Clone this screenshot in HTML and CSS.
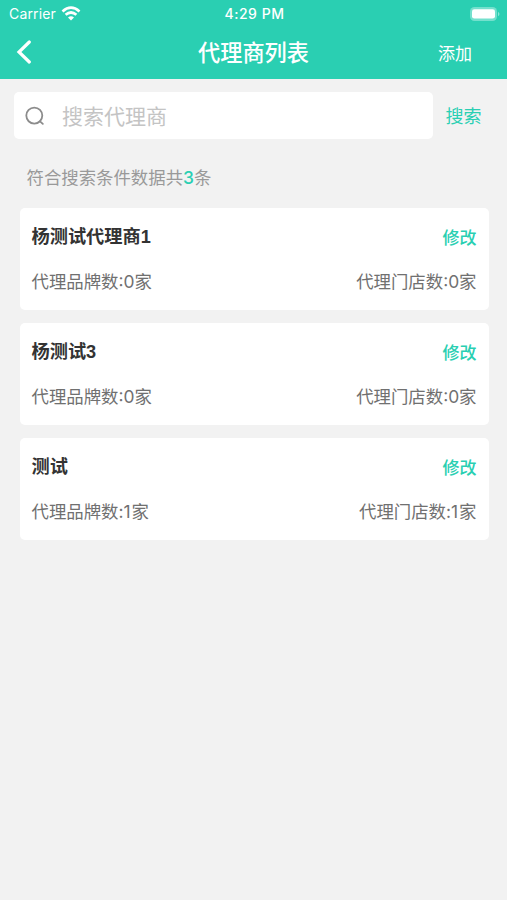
FILE: index.html
```html
<!DOCTYPE html>
<html lang="zh-CN">
<head>
<meta charset="utf-8">
<title>代理商列表</title>
<link rel="stylesheet" href="styles.css">
</head>
<body>
<header class="top">
  <div class="status">
    <div class="carrier"><span>Carrier</span>
      <svg class="wifi" width="20" height="15" viewBox="0 0 20 15" fill="none" stroke="#fff" stroke-width="2.7"><path d="M1.5 5.4Q10-2 18.5 5.4M4.6 8.8Q10 4.2 15.4 8.8"/><path d="M10 14.5L7 11.5Q10 9 13 11.5Z" fill="#fff" stroke="none"/></svg>
    </div>
    <div class="time">4:29 PM</div>
    <svg class="battery" width="30" height="14" viewBox="0 0 30 14"><rect width="27" height="14" rx="4.5" fill="#fff" fill-opacity=".35"/><rect x="2" y="2.2" width="23" height="9.4" rx="2.4" fill="#fff"/><path d="M28 4.7Q31 7 28 9.3Z" fill="#fff" fill-opacity=".45"/></svg>
  </div>
  <nav class="nav">
    <svg class="back" width="16" height="24" viewBox="0 0 16 24" fill="none" stroke="#fff" stroke-width="3.2" stroke-linecap="round" stroke-linejoin="miter"><path d="M13.3 2L3 12L13.3 22"/></svg>
    <h1>代理商列表</h1>
    <a class="add">添加</a>
  </nav>
</header>
<main>
  <div class="search">
    <div class="field">
      <svg width="20" height="20" viewBox="0 0 20 20" fill="none" stroke="#8c8c8c" stroke-width="1.8" stroke-linecap="round"><circle cx="9.3" cy="10.6" r="8"/><path d="M15 16.3L17.8 18.9"/></svg>
      <span>搜索代理商</span>
    </div>
    <a class="go">搜索</a>
  </div>
  <p class="summary">符合搜索条件数据共<b>3</b>条</p>
  <section class="list">
    <article class="card"><div class="row"><h2>杨测试代理商<b>1</b></h2><a>修改</a></div><div class="row meta"><span>代理品牌数:0家</span><span>代理门店数:0家</span></div></article>
    <article class="card"><div class="row"><h2>杨测试<b>3</b></h2><a>修改</a></div><div class="row meta"><span>代理品牌数:0家</span><span>代理门店数:0家</span></div></article>
    <article class="card"><div class="row"><h2>测试</h2><a>修改</a></div><div class="row meta"><span>代理品牌数:<i>1</i>家</span><span>代理门店数:<i>1</i>家</span></div></article>
  </section>
</main>
</body>
</html>
```
FILE: styles.css
```css
* { box-sizing: border-box; margin: 0; }
body { min-height: 900px; background: #f2f2f2; font-family: Inter, "Noto Sans CJK SC", sans-serif; color: #333; }
.top { height: 79px; background: #2acfb2; color: #fff; }
.status { display: grid; grid-template-columns: 1fr auto 1fr; align-items: center; height: 27px; padding: 0 7px 0 9px; font-size: 14px; }
.carrier { display: flex; align-items: center; gap: 5px; letter-spacing: .15px; }
.time { font-weight: 500; letter-spacing: .5px; }
.battery { justify-self: end; }
.nav { display: grid; grid-template-columns: 1fr auto 1fr; align-items: center; height: 50px; padding: 0 16px; }
.nav h1 { margin-top: 2px; font-size: 22.2px; line-height: 30px; font-weight: 500; }
.add { justify-self: end; margin-right: 19px; font-size: 17px; }
.search { display: flex; align-items: center; padding: 13px 25.5px 0 14px; }
.field { display: flex; align-items: center; gap: 17px; width: 419px; height: 47px; padding: 0 0 1px 11px; border-radius: 5px; background: #fff; color: #c4c4c4; font-size: 21px; }
.go { margin: 0 0 1px auto; color: #2acfb2; font-size: 18px; }
.summary { padding: 25.5px 26.5px 0; color: #999; font-size: 17.4px; line-height: 26px; }
.summary b { color: #2acfb2; font-weight: 500; }
.list { display: grid; gap: 13.2px; padding: 17px 18.5px 0 19.5px; }
.card { height: 102px; padding: 12.5px 12px 0 12px; border-radius: 5px; background: #fff; }
.row { display: flex; justify-content: space-between; align-items: center; height: 30px; }
.row h2 { font-size: 18.2px; font-weight: 600; }
.row h2 b { font-family: "Liberation Sans", sans-serif; }
.row a { margin-top: 2px; color: #2acfb2; font-size: 17px; font-weight: 500; }
.meta { margin-top: 15px; color: #707070; font-size: 17.4px; }
.meta i { font-style: normal; letter-spacing: 1px; }
```
